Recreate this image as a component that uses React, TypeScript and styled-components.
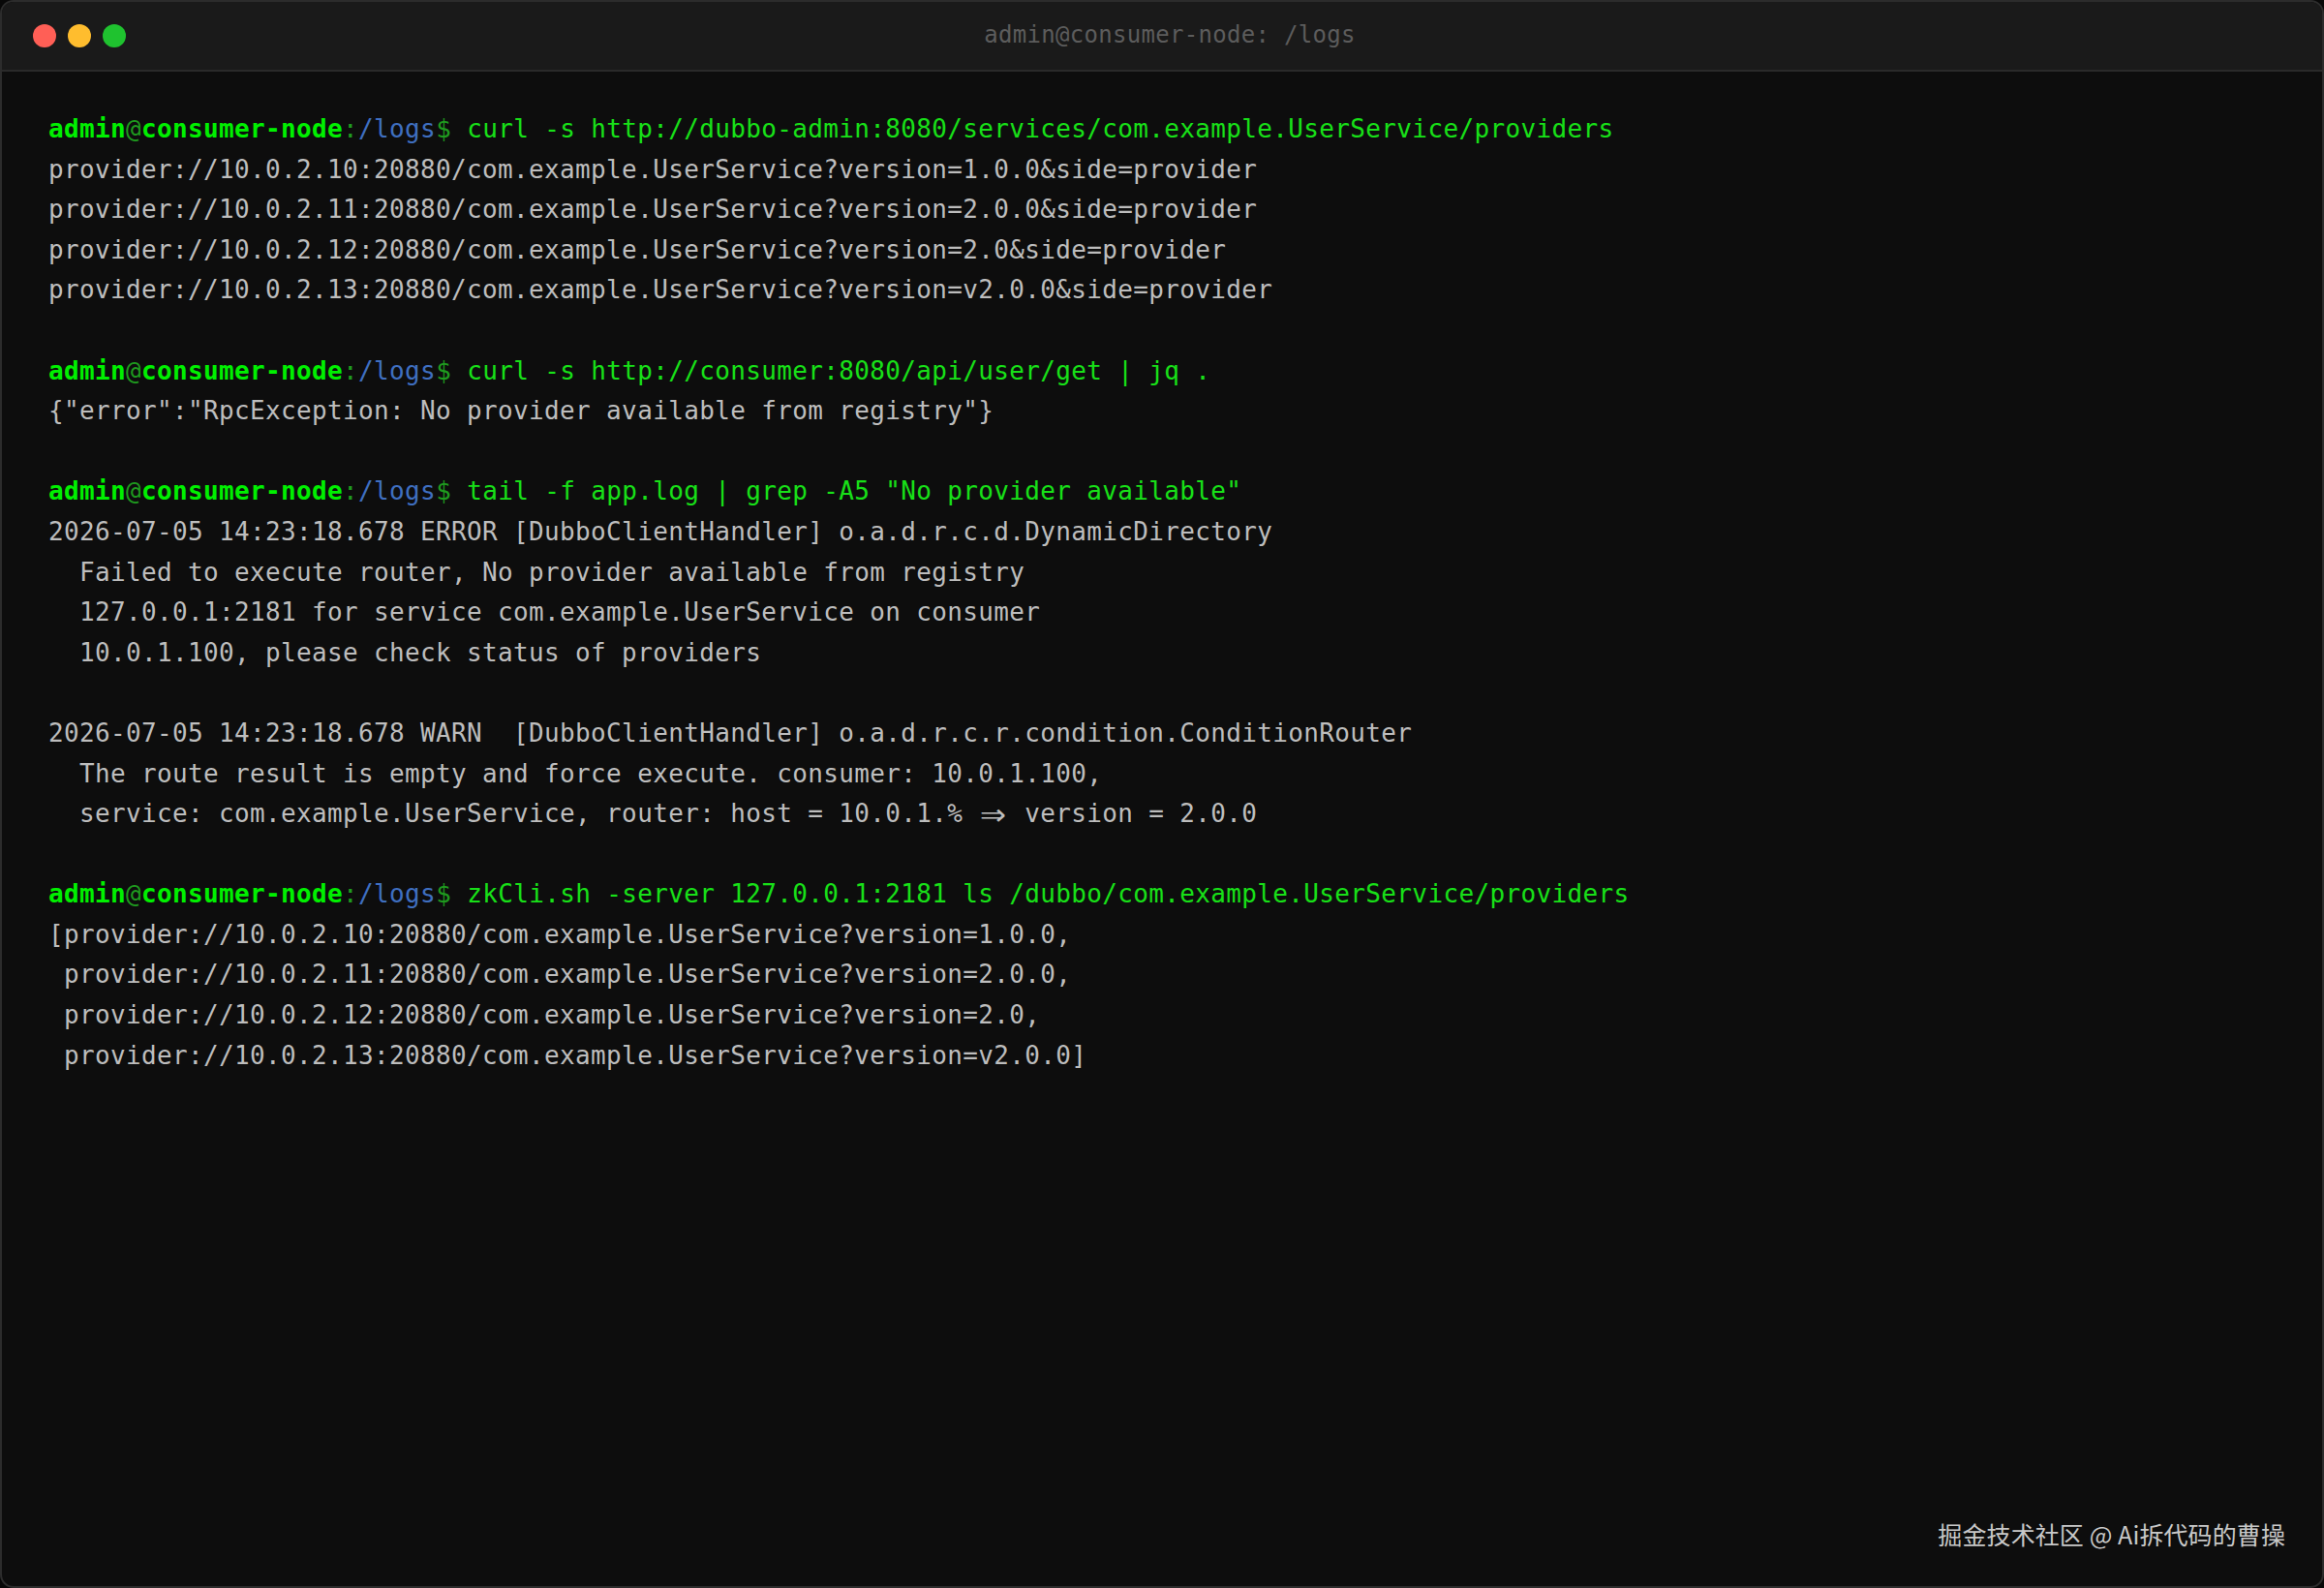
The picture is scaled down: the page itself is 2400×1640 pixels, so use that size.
import { FC } from 'react';

import styled, { createGlobalStyle } from 'styled-components';

const MONO = '"DejaVu Sans Mono", "Liberation Mono", monospace';

type Entry = { cmd: string; output: string[] };

const ENTRIES: Entry[] = [
  {
    cmd: 'curl -s http://dubbo-admin:8080/services/com.example.UserService/providers',
    output: [
      'provider://10.0.2.10:20880/com.example.UserService?version=1.0.0&side=provider',
      'provider://10.0.2.11:20880/com.example.UserService?version=2.0.0&side=provider',
      'provider://10.0.2.12:20880/com.example.UserService?version=2.0&side=provider',
      'provider://10.0.2.13:20880/com.example.UserService?version=v2.0.0&side=provider',
      '',
    ],
  },
  {
    cmd: 'curl -s http://consumer:8080/api/user/get | jq .',
    output: ['{"error":"RpcException: No provider available from registry"}', ''],
  },
  {
    cmd: 'tail -f app.log | grep -A5 "No provider available"',
    output: [
      '2026-07-05 14:23:18.678 ERROR [DubboClientHandler] o.a.d.r.c.d.DynamicDirectory',
      '  Failed to execute router, No provider available from registry',
      '  127.0.0.1:2181 for service com.example.UserService on consumer',
      '  10.0.1.100, please check status of providers',
      '',
      '2026-07-05 14:23:18.678 WARN  [DubboClientHandler] o.a.d.r.c.r.condition.ConditionRouter',
      '  The route result is empty and force execute. consumer: 10.0.1.100,',
      '  service: com.example.UserService, router: host = 10.0.1.% => version = 2.0.0',
      '',
    ],
  },
  {
    cmd: 'zkCli.sh -server 127.0.0.1:2181 ls /dubbo/com.example.UserService/providers',
    output: [
      '[provider://10.0.2.10:20880/com.example.UserService?version=1.0.0,',
      ' provider://10.0.2.11:20880/com.example.UserService?version=2.0.0,',
      ' provider://10.0.2.12:20880/com.example.UserService?version=2.0,',
      ' provider://10.0.2.13:20880/com.example.UserService?version=v2.0.0]',
    ],
  },
];

// the terminal font draws => as one wide arrow
const renderOutput = (text: string) => {
  const [before, after] = text.split('=>');
  if (after === undefined) return text;
  return (
    <>
      {before}
      <Arrow>⇒</Arrow>
      {after}
    </>
  );
};

const App: FC = () => {
  return (
    <>
      <GlobalStyle />
      <Window>
        <TitleBar>
          <Lights>
            <Light color="#ff5f56" />
            <Light color="#ffbd2e" />
            <Light color="#1fc22f" />
          </Lights>
          <Title>admin@consumer-node: /logs</Title>
        </TitleBar>
        <Screen>
          {ENTRIES.map((entry) => (
            <div key={entry.cmd}>
              <Line>
                <User>admin</User>
                <Dim>@</Dim>
                <User>consumer-node</User>
                <Dim>:</Dim>
                <Path>/logs</Path>
                <Dim>$</Dim> <Command>{entry.cmd}</Command>
              </Line>
              {entry.output.map((text, i) => (
                <Line key={i}>{renderOutput(text)}</Line>
              ))}
            </div>
          ))}
        </Screen>
        <Watermark>掘金技术社区 @ Ai拆代码的曹操</Watermark>
      </Window>
    </>
  );
};

export default App;

const GlobalStyle = createGlobalStyle`
  html, body {
    margin: 0;
    padding: 0;
    background: #080808;
  }
`;

const Window = styled.div`
  position: relative;
  width: 2400px;
  height: 1640px;
  box-sizing: border-box;
  display: flex;
  flex-direction: column;
  background: #0d0d0d;
  border: 2px solid #2c2c2c;
  border-radius: 14px;
  overflow: hidden;
`;

const TitleBar = styled.div`
  height: 72px;
  flex-shrink: 0;
  box-sizing: border-box;
  display: flex;
  align-items: center;
  padding: 0 32px;
  background: #1a1a1a;
  border-bottom: 2px solid #2a2a2a;
`;

const Lights = styled.div`
  display: flex;
  gap: 12px;
`;

const Light = styled.span<{ color: string }>`
  width: 24px;
  height: 24px;
  border-radius: 50%;
  background: ${({ color }) => color};
`;

const Title = styled.div`
  flex: 1;
  padding: 0 80px 2px 0;
  text-align: center;
  font-family: ${MONO};
  font-size: 24px;
  letter-spacing: 0.3px;
  color: #5c5c5c;
`;

const Screen = styled.div`
  flex: 1;
  padding: 39px 48px;
  font-family: ${MONO};
  font-size: 26px;
  letter-spacing: 0.35px;
  line-height: 41.6px;
  color: #bdbdbd;
`;

const Line = styled.div`
  min-height: 41.6px;
  white-space: pre;
`;

const Arrow = styled.span`
  display: inline-block;
  width: 32px;
  text-align: center;
  transform: scale(1.7, 1.5);
`;

const User = styled.span`
  font-weight: 700;
  color: #00f000;
`;

const Dim = styled.span`
  color: #1f9a1f;
`;

const Path = styled.span`
  color: #3f6fc0;
`;

const Command = styled.span`
  color: #18e018;
`;

const Watermark = styled.div`
  position: absolute;
  right: 38px;
  bottom: 36px;
  font-family: "Noto Sans CJK SC", "Noto Sans", sans-serif;
  font-size: 25px;
  letter-spacing: 0.1px;
  color: #c8c8c8;
`;
